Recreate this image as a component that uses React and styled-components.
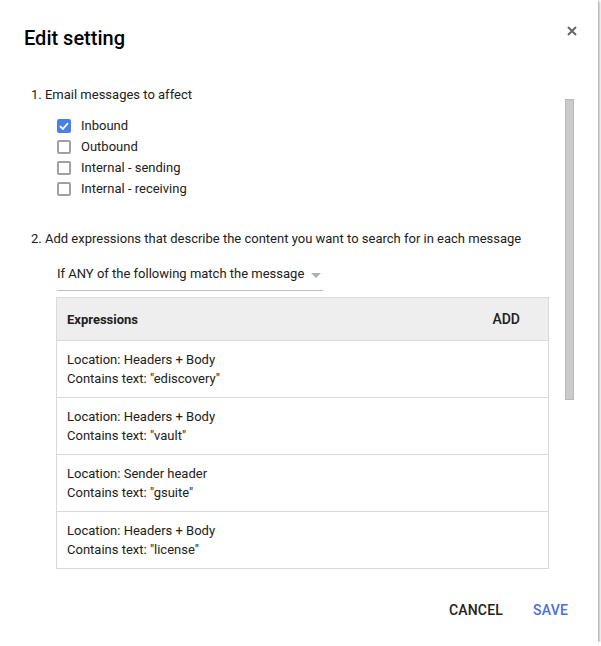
import React from 'react';
import styled, { createGlobalStyle } from 'styled-components';

const GlobalStyle = createGlobalStyle`
  html, body {
    margin: 0;
    padding: 0;
    background: #ffffff;
  }
  body {
    font-family: Roboto, 'Liberation Sans', Arial, sans-serif;
    color: #212121;
  }
`;

const Dialog = styled.div`
  width: 598px;
  height: 642px;
  background: #fff;
  box-shadow: 1px 1px 3px rgba(0, 0, 0, 0.45);
  display: flex;
  flex-direction: column;
`;

const Header = styled.div`
  height: 72px;
  box-sizing: border-box;
  padding: 24px 21px 0 24px;
  display: flex;
  justify-content: space-between;
  align-items: flex-start;
`;

const Title = styled.h2`
  margin: 0;
  font-size: 20px;
  line-height: 28px;
  font-weight: 500;
  color: #000;
`;

const CloseButton = styled.button`
  border: none;
  background: none;
  padding: 0;
  margin-top: 2px;
  width: 10px;
  height: 10px;
  cursor: pointer;
  display: flex;
`;

const Body = styled.div`
  height: 512px;
  display: flex;
`;

const Content = styled.div`
  flex: 1;
  overflow: hidden;
  padding: 13px 16px 0 31px;
`;

const ScrollTrack = styled.div`
  width: 9px;
  margin-right: 24px;
  padding-top: 27px;
`;

const ScrollThumb = styled.div`
  height: 301px;
  box-sizing: border-box;
  background: #cbcbcb;
  border: 1px solid #b9b9b9;
`;

const SectionTitle = styled.div`
  font-size: 13px;
  line-height: 20px;
  margin-top: ${(p) => p.$top || 0}px;
`;

const OptionList = styled.div`
  margin: 10px 0 0 26px;
  display: flex;
  flex-direction: column;
`;

const Option = styled.label`
  height: 21px;
  display: flex;
  align-items: center;
  gap: 10px;
  font-size: 13px;
`;

const Box = styled.span`
  width: 14px;
  height: 14px;
  box-sizing: border-box;
  border-radius: 2px;
  border: 2px solid ${(p) => (p.$checked ? '#4a80e6' : '#a0a0a0')};
  background: ${(p) => (p.$checked ? '#4a80e6' : '#fff')};
  display: flex;
  align-items: center;
  justify-content: center;
`;

const Select = styled.div`
  margin: 15px 0 0 26px;
  width: 266px;
  box-sizing: border-box;
  padding-bottom: 6px;
  border-bottom: 1px solid #bdbdbd;
  display: flex;
  align-items: center;
  gap: 7px;
  font-size: 13px;
  line-height: 20px;
`;

const Arrow = styled.span`
  width: 0;
  height: 0;
  border-left: 5px solid transparent;
  border-right: 5px solid transparent;
  border-top: 5px solid #b0b0b0;
  margin-top: 2px;
`;

const Table = styled.div`
  margin: 6px 0 0 25px;
  border: 1px solid #dadada;
`;

const TableHead = styled.div`
  height: 42px;
  background: #eeeeee;
  display: flex;
  align-items: center;
  justify-content: space-between;
  padding: 0 28px 0 10px;
  font-size: 13px;
`;

const HeadLabel = styled.span`
  font-weight: 700;
`;

const AddButton = styled.button`
  border: none;
  background: none;
  padding: 0;
  font-family: inherit;
  font-size: 14px;
  font-weight: 500;
  color: #212121;
  cursor: pointer;
`;

const Row = styled.div`
  padding: 9px 10px;
  height: 38px;
  border-top: 1px solid #dadada;
  font-size: 13px;
  line-height: 19px;
  white-space: pre;
`;

const Footer = styled.div`
  flex: 1;
  display: flex;
  justify-content: flex-end;
  align-items: center;
  padding: 0 15px 6px 0;
`;

const FlatButton = styled.button`
  border: none;
  background: none;
  font-family: inherit;
  font-size: 14px;
  font-weight: 500;
  letter-spacing: 0.2px;
  padding: 9px 15px;
  color: ${(p) => (p.$primary ? '#4a6ee0' : '#212121')};
  cursor: pointer;
`;

const Check = () => (
  <svg width="10" height="8" viewBox="0 0 10 8">
    <path d="M1 4.2 L3.8 7 L9 1.2" fill="none" stroke="#fff" strokeWidth="1.8" />
  </svg>
);

const options = [
  { label: 'Inbound', checked: true },
  { label: 'Outbound', checked: false },
  { label: 'Internal - sending', checked: false },
  { label: 'Internal - receiving', checked: false },
];

const expressions = [
  { location: 'Headers + Body', text: 'ediscovery' },
  { location: 'Headers + Body', text: 'vault' },
  { location: 'Sender header', text: 'gsuite' },
  { location: 'Headers + Body', text: 'license' },
];

const App = () => (
  <>
    <GlobalStyle />
    <Dialog>
      <Header>
        <Title>Edit setting</Title>
        <CloseButton aria-label="Close">
          <svg width="10" height="10" viewBox="0 0 10 10">
            <path d="M1 1 L9 9 M9 1 L1 9" stroke="#666" strokeWidth="2" />
          </svg>
        </CloseButton>
      </Header>
      <Body>
        <Content>
          <SectionTitle>1. Email messages to affect</SectionTitle>
          <OptionList>
            {options.map((o) => (
              <Option key={o.label}>
                <Box $checked={o.checked}>{o.checked && <Check />}</Box>
                {o.label}
              </Option>
            ))}
          </OptionList>

          <SectionTitle $top={30}>
            2. Add expressions that describe the content you want to search for in each message
          </SectionTitle>
          <Select>
            If ANY of the following match the message
            <Arrow />
          </Select>
          <Table>
            <TableHead>
              <HeadLabel>Expressions</HeadLabel>
              <AddButton>ADD</AddButton>
            </TableHead>
            {expressions.map((e, i) => (
              <Row key={i}>
                {`Location: ${e.location}\nContains text: "${e.text}"`}
              </Row>
            ))}
          </Table>
        </Content>
        <ScrollTrack>
          <ScrollThumb />
        </ScrollTrack>
      </Body>
      <Footer>
        <FlatButton>CANCEL</FlatButton>
        <FlatButton $primary>SAVE</FlatButton>
      </Footer>
    </Dialog>
  </>
);

export default App;
